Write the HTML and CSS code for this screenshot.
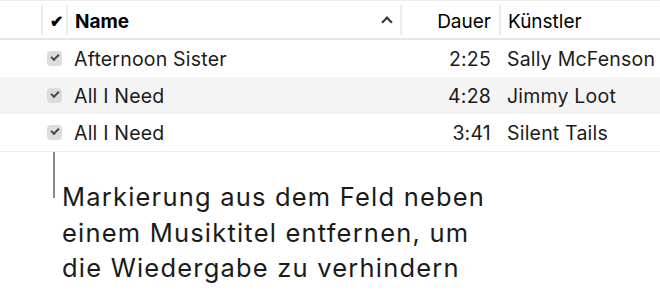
FILE: index.html
```html
<!DOCTYPE html>
<html lang="de">
<head>
  <meta charset="UTF-8">
  <title>Musiktitel</title>
  <link rel="stylesheet" href="styles.css">
</head>
<body>
  <div class="songs">
    <div class="head">
      <div class="col lead"></div>
      <div class="col check">&#10004;</div>
      <div class="col name">Name <span class="sort"></span></div>
      <div class="col time">Dauer</div>
      <div class="col artist">Künstler</div>
    </div>

    <div class="row">
      <div class="lead"></div>
      <div class="check"><span class="box"></span></div>
      <div class="name">Afternoon Sister</div>
      <div class="time">2:25</div>
      <div class="artist">Sally McFenson</div>
    </div>
    <div class="row alt">
      <div class="lead"></div>
      <div class="check"><span class="box"></span></div>
      <div class="name">All I Need</div>
      <div class="time">4:28</div>
      <div class="artist">Jimmy Loot</div>
    </div>
    <div class="row">
      <div class="lead"></div>
      <div class="check"><span class="box"></span></div>
      <div class="name">All I Need</div>
      <div class="time">3:41</div>
      <div class="artist">Silent Tails</div>
    </div>
  </div>

  <div class="callout">
    <div class="leader"></div>
    <p>Markierung aus dem Feld neben<br>einem Musiktitel entfernen, um<br>die Wiedergabe zu verhindern</p>
  </div>
</body>
</html>
```

FILE: styles.css
```css
* {
  box-sizing: border-box;
}
html, body {
  margin: 0;
  padding: 0;
  background: #fff;
  font-family: Inter, "Liberation Sans", sans-serif;
  color: #1b1b1b;
}

.songs {
  border-top: 1px solid #ececec;
  border-bottom: 1px solid #eeeeee;
}

.head, .row {
  display: grid;
  grid-template-columns: 41px 25px 334px 99px 1fr;
  align-items: center;
}

.head {
  height: 39px;
  border-bottom: 2px solid #e6e6e6;
  font-weight: 700;
  font-size: 19px;
  color: #000;
}

.head .col {
  height: 30px;
  padding-top: 3px;
  display: flex;
  align-items: center;
  border-left: 2px solid #ececec;
}
.head .lead {
  border-left: none;
}
.head .check {
  justify-content: center;
  padding-left: 4px;
  font-size: 16px;
}
.head .name {
  padding-left: 7px;
  justify-content: space-between;
  padding-right: 9px;
}
.head .time {
  justify-content: flex-end;
  padding-right: 8px;
  font-weight: 400;
}
.head .artist {
  padding-left: 7px;
  font-weight: 400;
}

.sort {
  width: 8px;
  height: 8px;
  border-left: 2px solid #333;
  border-top: 2px solid #333;
  transform: rotate(45deg);
  margin-top: 2px;
}

.row {
  height: 37px;
  font-size: 19.5px;
  letter-spacing: 0.2px;
}
.row.alt {
  background: #f4f4f4;
}
.row .check {
  display: flex;
  justify-content: flex-end;
  padding-right: 4px;
}
.row .name {
  padding-left: 8px;
}
.row .time {
  text-align: right;
  padding-right: 8px;
}
.row .artist {
  padding-left: 8px;
}

.box {
  width: 15px;
  height: 15px;
  border-radius: 4px;
  background: #dcdcdc;
  position: relative;
}
.box::after {
  content: "";
  position: absolute;
  left: 4px;
  top: 3px;
  width: 6px;
  height: 3px;
  border-left: 2px solid #444;
  border-bottom: 2px solid #444;
  transform: rotate(-45deg);
}

.callout {
  display: flex;
  padding-left: 53px;
}
.leader {
  width: 2px;
  height: 46px;
  background: #8a8a8a;
  flex-shrink: 0;
}
.callout p {
  margin: 27px 0 0 7px;
  font-size: 25.5px;
  letter-spacing: 1.2px;
  line-height: 35.5px;
  color: #1b1b1b;
  white-space: nowrap;
}
```
